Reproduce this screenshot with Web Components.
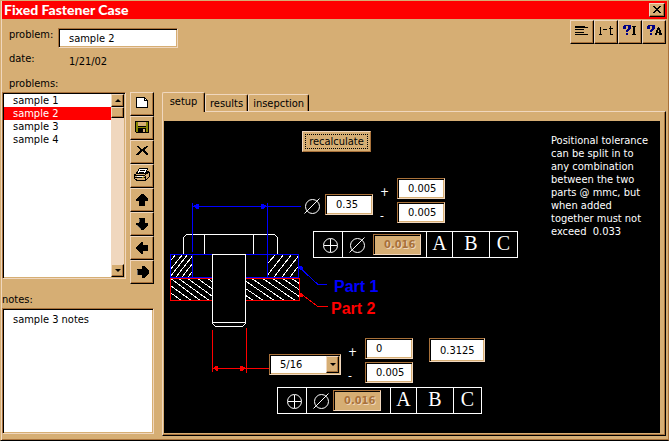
<!DOCTYPE html>
<html lang="en">
<head>
<meta charset="utf-8">
<title>Fixed Fastener Case</title>
<style>
  :root {
    --tan: #d6ae74;
    --light: #f0d7be;
    --brown: #a8713a;
    --red: #ff0000;
  }
  html, body { margin: 0; }
  body {
    min-height: 100vh;
    display: flex;
    background: var(--tan);
    color: #000;
    font: 11px/13px "DejaVu Sans Condensed", "DejaVu Sans", sans-serif;
  }
</style>
</head>
<body>
<case-window></case-window>
<script>
const BASE = `
  *, *::before, *::after { box-sizing: border-box; }
  :host([hidden]) { display: none; }
  button, input, select, textarea { font: inherit; color: #000; margin: 0; border-radius: 0; outline: none; }
  button { padding: 0; }
`;
const RAISED = `
  border: 1px solid; border-color: var(--light) #000 #000 var(--light);
  box-shadow: inset -1px -1px 0 var(--brown);
  background: var(--tan);
`;
const SUNKEN = `
  border: 1px solid; border-color: var(--brown) var(--light) var(--light) var(--brown);
  box-shadow: inset 1px 1px 0 #000, inset -1px -1px 0 var(--tan);
`;

class Part extends HTMLElement {
  constructor() {
    super();
    this.attachShadow({ mode: 'open' });
  }
  connectedCallback() {
    if (!this.shadowRoot.childNodes.length) {
      this.shadowRoot.innerHTML = `<style>${BASE}${this.css()}</style>${this.html()}`;
    }
  }
  attr(name, fallback = '') { return this.getAttribute(name) ?? fallback; }
  css() { return ''; }
  html() { return '<slot></slot>'; }
}

const ICONS = {
  page: `<path d="M6.5 5.5H14.5L17.5 8.5V15.5H6.5Z" fill="#fff" stroke="#000"/><path d="M14.5 5.5V8.5H17.5" fill="none" stroke="#000"/>`,
  disk: `<path d="M5 5H19V17H6L5 16Z" fill="#000"/><path d="M6 6H8V11H16V6H18V16H6Z" fill="#848400"/><path d="M8 6H16V10H8Z" fill="#d6ae74"/><path d="M8 12H16V16H8Z" fill="#000"/><path d="M13 13H15V16H13Z" fill="#d6ae74"/>`,
  cross: `<path d="M6 6L8 6L12 9L17 6L19 6L14 10L18 14L17 15L12 11L8 15L6 15L10 10Z" fill="#000"/>`,
  printer: `<path d="M9.5 4.5H17.5L15.5 9.5H6.5Z" fill="#fff" stroke="#000"/><path d="M10 6.5H15M9 8.5H14" stroke="#000"/><path d="M4.500 10.500L7 9.500H15.500L18 7.500L19.500 9V12.500L16 16H6.500L4.500 14.500Z" fill="#d6ae74" stroke="#000"/><path d="M5 11.500H14.500L18 8.500M15.500 12V16M5 13.500H15" fill="none" stroke="#000"/><path d="M7 12H13V13H7Z" fill="#fff"/><path d="M12 13H14V14H12Z" fill="#848400"/>`,
  up: `<path d="M12 6H13L18 11V13H15V18H9V13H6V11Z" fill="#000"/>`,
  down: `<path d="M9 6H15V11H18V13L13 18H12L6 13V11H9Z" fill="#000"/><path d="M7.500 13.500L11 17M9.500 7V10" stroke="#666"/>`,
  left: `<path d="M6 12L11 6H13V9H18V15H13V18H11L6 13Z" fill="#000"/>`,
  right: `<path d="M7 9H12V6H14L19 11V13L14 18H12V15H7Z" fill="#000"/><path d="M7.500 10V15" stroke="#666"/>`,
  close: `<path d="M4 3H6V4H7V5H9V4H10V3H12V4H11V5H10V6H9V7H10V8H11V9H12V10H10V9H9V8H7V9H6V10H4V9H5V8H6V7H7V6H6V5H5V4H4Z" fill="#000"/>`,
  lines: `<path d="M5 6H15V7H18V8H5ZM5 9H14V10H5ZM5 12H14V13H5ZM5 14H18V15H5Z" fill="#000"/>`,
  range: `<path d="M6.500 7V15M5 14.500H8M9 9.500H13M16.500 6V15M15 8.500H19M16 14.500H19" fill="none" stroke="#000"/>`,
  helpI: `<path d="M5 9V6L7 5H12L13 6V9L10 11V12H8V10L10 8V6H8V9ZM8 13H10V15H8Z" fill="#000084"/><path d="M14 6H18V7H17V14H18V15H14V14H15V7H14Z" fill="#000"/>`,
  helpA: `<path d="M5 9V6L7 5H12L13 6V9L10 11V12H8V10L10 8V6H8V9ZM8 13H10V15H8Z" fill="#000084"/><path d="M16 7H17V8H18V10H19V13H20V15H17V13H15V15H13V13H14V10H15V8H16ZM16 10V12H17V10Z" fill="#000" fill-rule="evenodd"/>`,
};

customElements.define('bevel-button', class extends Part {
  css() { return `
    :host { display: block; width: 24px; height: 24px; }
    :host([size="small"]) { width: 16px; height: 14px; }
    :host([size="scroll"]) { width: 13px; height: 13px; }
    button { display: flex; align-items: center; justify-content: center; width: 100%; height: 100%; overflow: hidden; ${RAISED} }
    svg { display: block; flex: none; shape-rendering: crispEdges; }
    i { border: solid transparent; border-width: 0 3px 3px; border-bottom-color: #000; }
    i.down { border-width: 3px 3px 0; border-top-color: #000; }
  `; }
  html() {
    const icon = this.attr('icon');
    const small = this.attr('size') === 'small';
    const art = this.attr('size') === 'scroll'
      ? (icon ? `<i class="${icon}"></i>` : '')
      : `<svg width="${small ? 16 : 24}" height="${small ? 14 : 24}" viewBox="0 0 ${small ? '16 14' : '24 24'}" aria-hidden="true">${ICONS[icon]}</svg>`;
    return `<button type="button" aria-label="${this.attr('label')}">${art}</button>`;
  }
});

customElements.define('text-field', class extends Part {
  css() { return `
    :host { display: block; }
    .row { display: flex; align-items: start; }
    label { width: 49px; flex: none; }
    :host([sign]) label { width: 17px; padding-top: 8px; font-size: 12px; }
    input {
      display: block; width: 48px; height: 21px; padding: 0 2px 0 10px;
      background: #fff; ${SUNKEN}
    }
    :host([size="wide"]) input { width: 120px; height: 20px; }
    :host([size="tall"]) input { width: 56px; height: 24px; }
    :host([muted]) input {
      background: var(--tan); color: var(--brown); font-weight: bold;
      text-shadow: 1px 1px 0 var(--light);
    }
  `; }
  html() {
    const label = this.attr('label');
    const name = this.attr('name', label);
    const off = this.hasAttribute('muted') ? 'readonly' : '';
    return `<div class="row">${label ? `<label for="f">${label}</label>` : ''}
      <input id="f" type="text" value="${this.attr('value')}" aria-label="${name}" ${off}></div>`;
  }
});

customElements.define('drop-down', class extends Part {
  css() { return `
    :host { box-sizing: border-box; display: grid; width: 72px; height: 21px; ${SUNKEN} background: #fff; padding: 1px; }
    select, span { grid-area: 1 / 1; }
    select { appearance: none; border: 0; background: none; padding: 0 16px 0 9px; height: 17px; }
    span {
      justify-self: end; display: grid; place-items: center; width: 13px; pointer-events: none; ${RAISED}
    }
    span::before { content: ""; border: solid transparent; border-width: 3px 3px 0; border-top-color: #000; }
  `; }
  html() { return `<select aria-label="fastener size"><option>5/16</option><option>3/8</option><option>1/2</option></select><span></span>`; }
});

customElements.define('problem-list', class extends Part {
  css() { return `
    :host { display: block; }
    label { display: block; padding: 1px 7px 2px; }
    .box { display: flex; width: 124px; height: 187px; padding: 1px; background: #fff; ${SUNKEN} }
    select {
      flex: 1; min-width: 0; border: 0; padding: 0; background: #fff; overflow: hidden;
      scrollbar-width: none;
    }
    option { padding: 0 0 0 9px; min-height: 13px; height: 13px; line-height: 13px; color: #000; }
    option:checked {
      background: var(--red) linear-gradient(var(--red), var(--red)); color: #fff; -webkit-text-fill-color: #fff;
    }
    .scroll { display: flex; flex-direction: column; width: 13px; background: var(--light); }
    .thumb { height: 11px; ${RAISED} }
    .scroll :last-child { margin-top: auto; }
  `; }
  html() { return `
    <label for="list">problems:</label>
    <div class="box">
      <select id="list" size="14">
        <option>sample 1</option><option selected>sample 2</option><option>sample 3</option><option>sample 4</option>
      </select>
      <div class="scroll">
        <bevel-button size="scroll" icon="up" label="scroll up"></bevel-button>
        <div class="thumb"></div>
        <bevel-button size="scroll" icon="down" label="scroll down"></bevel-button>
      </div>
    </div>`; }
});

customElements.define('notes-box', class extends Part {
  css() { return `
    :host { display: flex; flex-direction: column; }
    textarea {
      flex: 1; width: 100%; min-height: 80px; margin-top: 2px; padding: 4px 10px; resize: none;
      background: #fff; ${SUNKEN}
    }
  `; }
  html() { return `<label for="notes">notes:</label><textarea id="notes">sample 3 notes</textarea>`; }
});

customElements.define('gd-symbol', class extends Part {
  css() { return `
    :host { display: block; width: 16px; height: 16px; }
    svg { display: block; fill: none; stroke: #fff; }
  `; }
  html() {
    const shape = this.attr('kind') === 'position'
      ? '<path d="M8.500 2V15M2 8.500H15" shape-rendering="crispEdges"/>'
      : '<path d="M0.500 15.500L15.500 0.500"/>';
    return `<svg width="16" height="16" viewBox="0 0 16 16" role="img" aria-label="${this.attr('kind')}"><circle cx="8.500" cy="8.500" r="7"/>${shape}</svg>`;
  }
});

customElements.define('control-frame', class extends Part {
  css() { return `
    :host { box-sizing: border-box; display: inline-flex; height: 27px; border: 1px solid #fff; }
    div { display: flex; align-items: center; justify-content: center; border-left: 1px solid #fff; }
    .pos { width: 28px; border: 0; padding-left: 4px; }
    .tol { width: 84px; gap: 8px; justify-content: start; padding-left: 6px; }
    :host([tight]) .tol { gap: 4px; }
    .datum { font: 20px/22px "Liberation Serif", serif; align-items: start; }
    .a { width: 26px; } .b { width: 37px; } .c { width: 28px; }
  `; }
  html() { return `
    <div class="pos"><gd-symbol kind="position"></gd-symbol></div>
    <div class="tol"><gd-symbol kind="diameter"></gd-symbol><text-field muted name="position tolerance" value="0.016"></text-field></div>
    <div class="datum a">A</div><div class="datum b">B</div><div class="datum c">C</div>`; }
});

customElements.define('fastener-drawing', class extends Part {
  css() { return `
    :host { display: block; }
    svg { display: block; fill: none; shape-rendering: crispEdges; }
    .blue { stroke: #00f; } .red { stroke: #f00; } .white { stroke: #fff; }
    .fb { fill: #00f; } .fr { fill: #f00; }
    text { font: bold 16px "Liberation Sans", Arial, sans-serif; stroke: none; }
  `; }
  html() { return `
  <svg width="380" height="312" viewBox="164 121 380 312" role="img" aria-label="Bolt through part 1 and part 2">
    <defs>
      <clipPath id="p1"><path d="M171 255H192V277H171ZM268 255H298V277H268Z"/></clipPath>
      <clipPath id="p2"><path d="M171 279H212V300H171ZM246 279H299V300H246Z"/></clipPath>
    </defs>
    <path class="white" d="M183.500 254V237.500L186.500 234.500H274.500L277.500 237.500V254M204.500 235V254M253.500 235V254"/>
    <g class="white" clip-path="url(#p1)">
      <path d="M164 269L176 254M169 271L183 254M170 277L188 254M176 277L194 254M182 277L200 254M188 277L206 254M261 271L276 254M266 277L284 254M274 277L292 254M282 277L300 254M290 277L308 254"/>
    </g>
    <g class="white" clip-path="url(#p2)">
      <path d="M164 281L192 301M164 288L182 301M170 278L201 301M178 278L210 301M187 278L219 301M197 278L229 301M207 278L239 301M239 291L254 301M239 284L264 301M244 280L275 301M251 278L285 301M262 278L296 301M272 278L306 301M282 278L316 301M291 278L325 301"/>
    </g>
    <path class="blue" d="M170.500 254.500H298.500V277.500H170.500ZM192.500 203V252M192.500 255V277M267.500 203V277M193 206.500H301M299 267L318 284.500H327"/>
    <path class="fb" d="M193 206L197 204H199V209H197ZM267 206L263 204H261V209H263ZM298 265L303 267V270H300Z"/>
    <path class="red" d="M170.500 278.500H299.500V300.500H170.500ZM212.500 330V372M246.500 328V373M213 368.500H270M300 293L318 306.500H328"/>
    <path class="fr" d="M213 368L216 366H218V371H216ZM246 368L242 366H240V371H242ZM299 292L303 294V297H300Z"/>
    <path class="white" d="M212.500 254.500H245.500V323.500L242.500 326.500H215.500L212.500 323.500ZM213 322.500H245" fill="#000"/>
    <text class="fb" x="334" y="292">Part 1</text>
    <text class="fr" x="331" y="314">Part 2</text>
  </svg>`; }
});

customElements.define('setup-canvas', class extends Part {
  css() { return `
    :host { flex: 1; display: flex; align-items: start; background: #000; color: #fff; }
    .plate { position: relative; flex: none; width: 380px; }
    /* Annotations pinned to the drawing */
    .pin { position: absolute; }
    .stack { display: grid; gap: 3px; }
    .push {
      height: 21px; width: 69px; background: var(--tan); border: 1px solid;
      border-color: var(--light) var(--brown) var(--brown) var(--light); padding: 2px;
    }
    .push span { display: grid; place-items: center; height: 15px; outline: 1px dotted #000; outline-offset: -1px; }
    p { margin: 0; flex: 1; padding: 13px 0 0 7px; white-space: pre; }
  `; }
  html() { return `
    <div class="plate">
      <fastener-drawing></fastener-drawing>
      <button type="button" class="push pin" style="left:138px;top:10px"><span>recalculate</span></button>
      <gd-symbol class="pin" kind="diameter" style="left:140px;top:77px"></gd-symbol>
      <text-field class="pin" name="hole diameter" value="0.35" style="left:161px;top:73px"></text-field>
      <div class="pin stack" style="left:216px;top:57px">
        <text-field sign label="+" name="hole plus" value="0.005"></text-field>
        <text-field sign label="-" name="hole minus" value="0.005"></text-field>
      </div>
      <control-frame class="pin" style="left:149px;top:110px"></control-frame>
      <drop-down class="pin" style="left:105px;top:233px"></drop-down>
      <div class="pin stack" style="left:184px;top:217px">
        <text-field sign label="+" name="fastener plus" value="0"></text-field>
        <text-field sign label="-" name="fastener minus" value="0.005"></text-field>
      </div>
      <text-field class="pin" size="tall" name="fastener decimal size" value="0.3125" style="left:265px;top:217px"></text-field>
      <control-frame tight class="pin" style="left:113px;top:266px"></control-frame>
    </div>
    <p>Positional tolerance
can be split in to
any combination
between the two
parts @ mmc, but
when added
together must not
exceed  0.033</p>`; }
});

customElements.define('tab-panel', class extends Part {
  css() { return `
    :host { flex: 1; display: flex; flex-direction: column; }
    nav { display: flex; align-items: end; height: 19px; }
    button {
      height: 17px; padding: 0 4px; background: var(--tan); border: 1px solid;
      border-color: var(--light) #000 transparent var(--light); border-bottom: 0;
      border-radius: 2px 2px 0 0; box-shadow: inset -1px 0 0 var(--brown);
    }
    [aria-selected="true"] {
      height: 20px; width: 43px; margin-bottom: -1px; padding-bottom: 3px; position: relative;
    }
    section {
      flex: 1; display: flex; padding: 9px 5px 2px 1px; border: 1px solid;
      border-color: var(--light) #000 #000 var(--light);
      box-shadow: inset -1px -1px 0 var(--brown);
    }
  `; }
  html() { return `
    <nav role="tablist">
      <button type="button" role="tab" aria-selected="true">setup</button>
      <button type="button" role="tab" aria-selected="false">results</button>
      <button type="button" role="tab" aria-selected="false">insepction</button>
    </nav>
    <section role="tabpanel"><slot></slot></section>`; }
});

customElements.define('case-window', class extends Part {
  css() { return `
    :host {
      flex: 1; display: flex; flex-direction: column; background: var(--tan);
      border: 1px solid; border-color: var(--tan) var(--brown) #000 var(--tan);
      box-shadow: inset 1px 0 0 var(--light), inset 0 -1px 0 var(--brown);
      padding: 0 1px 4px 1px;
    }
    header {
      display: flex; align-items: center; justify-content: space-between; height: 18px;
      padding: 0 2px; background: var(--red); color: #fff;
    }
    h1 { margin: 0; font: 900 14px/18px Lato, sans-serif; }
    .top { display: flex; justify-content: space-between; align-items: start; height: 57px; padding: 1px 1px 0 7px; }
    .form { padding-top: 8px; display: grid; gap: 4px; }
    .date { display: flex; }
    .date dt { width: 49px; } .date dd { margin: 0; padding: 3px 0 0 11px; }
    dl { margin: 0; }
    .tools { display: flex; }
    main { flex: 1; display: flex; gap: 8px; padding-right: 1px; }
    aside { width: 152px; display: flex; flex-direction: column; }
    .lists { display: flex; justify-content: space-between; align-items: start; }
    .lists > div { padding-top: 16px; }
    notes-box { flex: 1; margin-top: 9px; margin-bottom: 2px; }
    article { flex: 1; display: flex; padding-top: 16px; }
  `; }
  html() {
    const tools = [['page', 'new'], ['disk', 'save'], ['cross', 'delete'], ['printer', 'print'],
      ['up', 'move up'], ['down', 'move down'], ['left', 'previous'], ['right', 'next']];
    return `
    <header><h1>Fixed Fastener Case</h1><bevel-button size="small" icon="close" label="close"></bevel-button></header>
    <div class="top">
      <div class="form">
        <text-field size="wide" label="problem:" value="sample 2"></text-field>
        <dl class="date"><dt>date:</dt><dd>1/21/02</dd></dl>
      </div>
      <div class="tools">
        <bevel-button icon="lines" label="list"></bevel-button>
        <bevel-button icon="range" label="range"></bevel-button>
        <bevel-button icon="helpI" label="information"></bevel-button>
        <bevel-button icon="helpA" label="about"></bevel-button>
      </div>
    </div>
    <main>
      <aside>
        <div class="lists">
          <problem-list></problem-list>
          <div>${tools.map(([i, l]) => `<bevel-button icon="${i}" label="${l}"></bevel-button>`).join('')}</div>
        </div>
        <notes-box></notes-box>
      </aside>
      <article><tab-panel><setup-canvas></setup-canvas></tab-panel></article>
    </main>`;
  }
});
</script>
</body>
</html>
